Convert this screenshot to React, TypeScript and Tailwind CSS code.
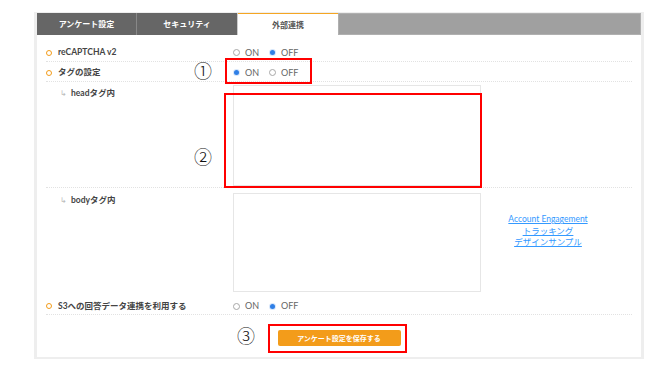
import React from "react";

const font = { fontFamily: 'Lato, "Noto Sans CJK JP", sans-serif' };

function Radio({ checked }: { checked: boolean }) {
  return checked ? (
    <span className="flex h-[7px] w-[7px] shrink-0 items-center justify-center rounded-full bg-[#d6e6fb]">
      <span className="block h-[5px] w-[5px] rounded-full bg-[#2f7fe6]" />
    </span>
  ) : (
    <span className="block h-[7px] w-[7px] shrink-0 rounded-full border border-[#a8a8a8] bg-white" />
  );
}

function OnOff({ on }: { on: boolean }) {
  return (
    <div className="flex items-center text-[9px] text-[#666]">
      <Radio checked={on} />
      <span className="ml-[5px]">ON</span>
      <span className="ml-[10px] flex items-center">
        <Radio checked={!on} />
      </span>
      <span className="ml-[5px]">OFF</span>
    </div>
  );
}

function Label({ text }: { text: string }) {
  return (
    <div className="flex w-[187px] items-center">
      <span className="block h-[6px] w-[6px] rounded-full border-[1.5px] border-[#f39c1a]" />
      <span className="ml-[6px] text-[8.5px] font-bold text-[#444]">{text}</span>
    </div>
  );
}

function SubLabel({ text }: { text: string }) {
  return (
    <div className="flex w-[187px] items-center pl-[14px] leading-[12px]">
      <span className="text-[8px] text-[#bbb]">↳</span>
      <span className="ml-[4px] text-[8.5px] font-bold text-[#444]">{text}</span>
    </div>
  );
}

function Num({ n, className }: { n: string; className: string }) {
  return (
    <span
      className={`absolute text-[18px] leading-[18px] font-light text-[#111] ${className}`}
      style={{ fontFamily: '"Noto Sans CJK JP", sans-serif' }}
    >
      {n}
    </span>
  );
}

export default function App() {
  return (
    <div className="relative h-[377px] w-[664px] bg-white pl-[34px] pt-[12px]" style={font}>
      <div className="flex h-[347px] w-[610px] flex-col border-x-[3px] border-b-[2px] border-t border-[#eeeeee]">
        <div className="flex h-[22px]">
          <div className="flex w-[100px] items-center justify-center border-r border-[#888] bg-[#666] text-[8px] font-bold text-white">
            アンケート設定
          </div>
          <div className="flex w-[101px] items-center justify-center border-r border-[#ccc] bg-[#666] text-[8px] font-bold text-white">
            セキュリティ
          </div>
          <div className="flex w-[100px] items-center justify-center border-t border-[#f5a623] bg-white text-[8px] font-bold text-[#555]">
            外部連携
          </div>
          <div className="flex-1 border border-[#b0b0b0] bg-[#a0a0a0]" />
        </div>

        <div className="flex flex-1 flex-col px-[9px] pt-[7px]">
          <div className="flex h-[20px] items-center border-b border-dotted border-[#e2e2e2] pt-[2px]">
            <Label text="reCAPTCHA v2" />
            <OnOff on={false} />
          </div>
          <div className="flex h-[20px] items-center border-b border-dotted border-[#e2e2e2] pt-[2px]">
            <Label text="タグの設定" />
            <OnOff on={true} />
          </div>
          <div className="flex h-[106px] items-start border-b border-dotted border-[#e2e2e2] pt-[3px]">
            <div className="pt-[2px]">
              <SubLabel text="headタグ内" />
            </div>
            <div className="h-[101px] w-[248px] border border-[#e6e6e6] bg-white" />
          </div>
          <div className="flex h-[108px] items-start pt-[5px]">
            <div className="pt-[1px]">
              <SubLabel text="bodyタグ内" />
            </div>
            <div className="h-[99px] w-[248px] border border-[#e6e6e6] bg-white" />
            <div className="flex w-[134px] flex-col items-center pt-[21px] text-[8.5px] leading-[11.7px] text-[#3399ff] underline">
              <span>Account Engagement</span>
              <span>トラッキング</span>
              <span>デザインサンプル</span>
            </div>
          </div>
          <div className="flex h-[19px] items-center border-b border-dotted border-[#e2e2e2] pt-[2px]">
            <Label text="S3への回答データ連携を利用する" />
            <OnOff on={false} />
          </div>
          <div className="flex flex-1 items-start justify-center pt-[15px]">
            <button className="h-[16px] w-[123px] rounded-[2px] bg-[#f39c1a] text-[7px] font-bold text-white">
              アンケート設定を保存する
            </button>
          </div>
        </div>
      </div>

      <div className="absolute left-[225px] top-[58px] h-[26px] w-[87px] border-2 border-[#ff0000]" />
      <div className="absolute left-[224px] top-[93px] h-[95px] w-[258px] border-2 border-[#ff0000]" />
      <div className="absolute left-[268px] top-[324px] h-[29px] w-[139px] border-2 border-[#ff0000]" />
      <Num n="①" className="left-[194px] top-[61px]" />
      <Num n="②" className="left-[194px] top-[147px]" />
      <Num n="③" className="left-[237px] top-[326px]" />
    </div>
  );
}
